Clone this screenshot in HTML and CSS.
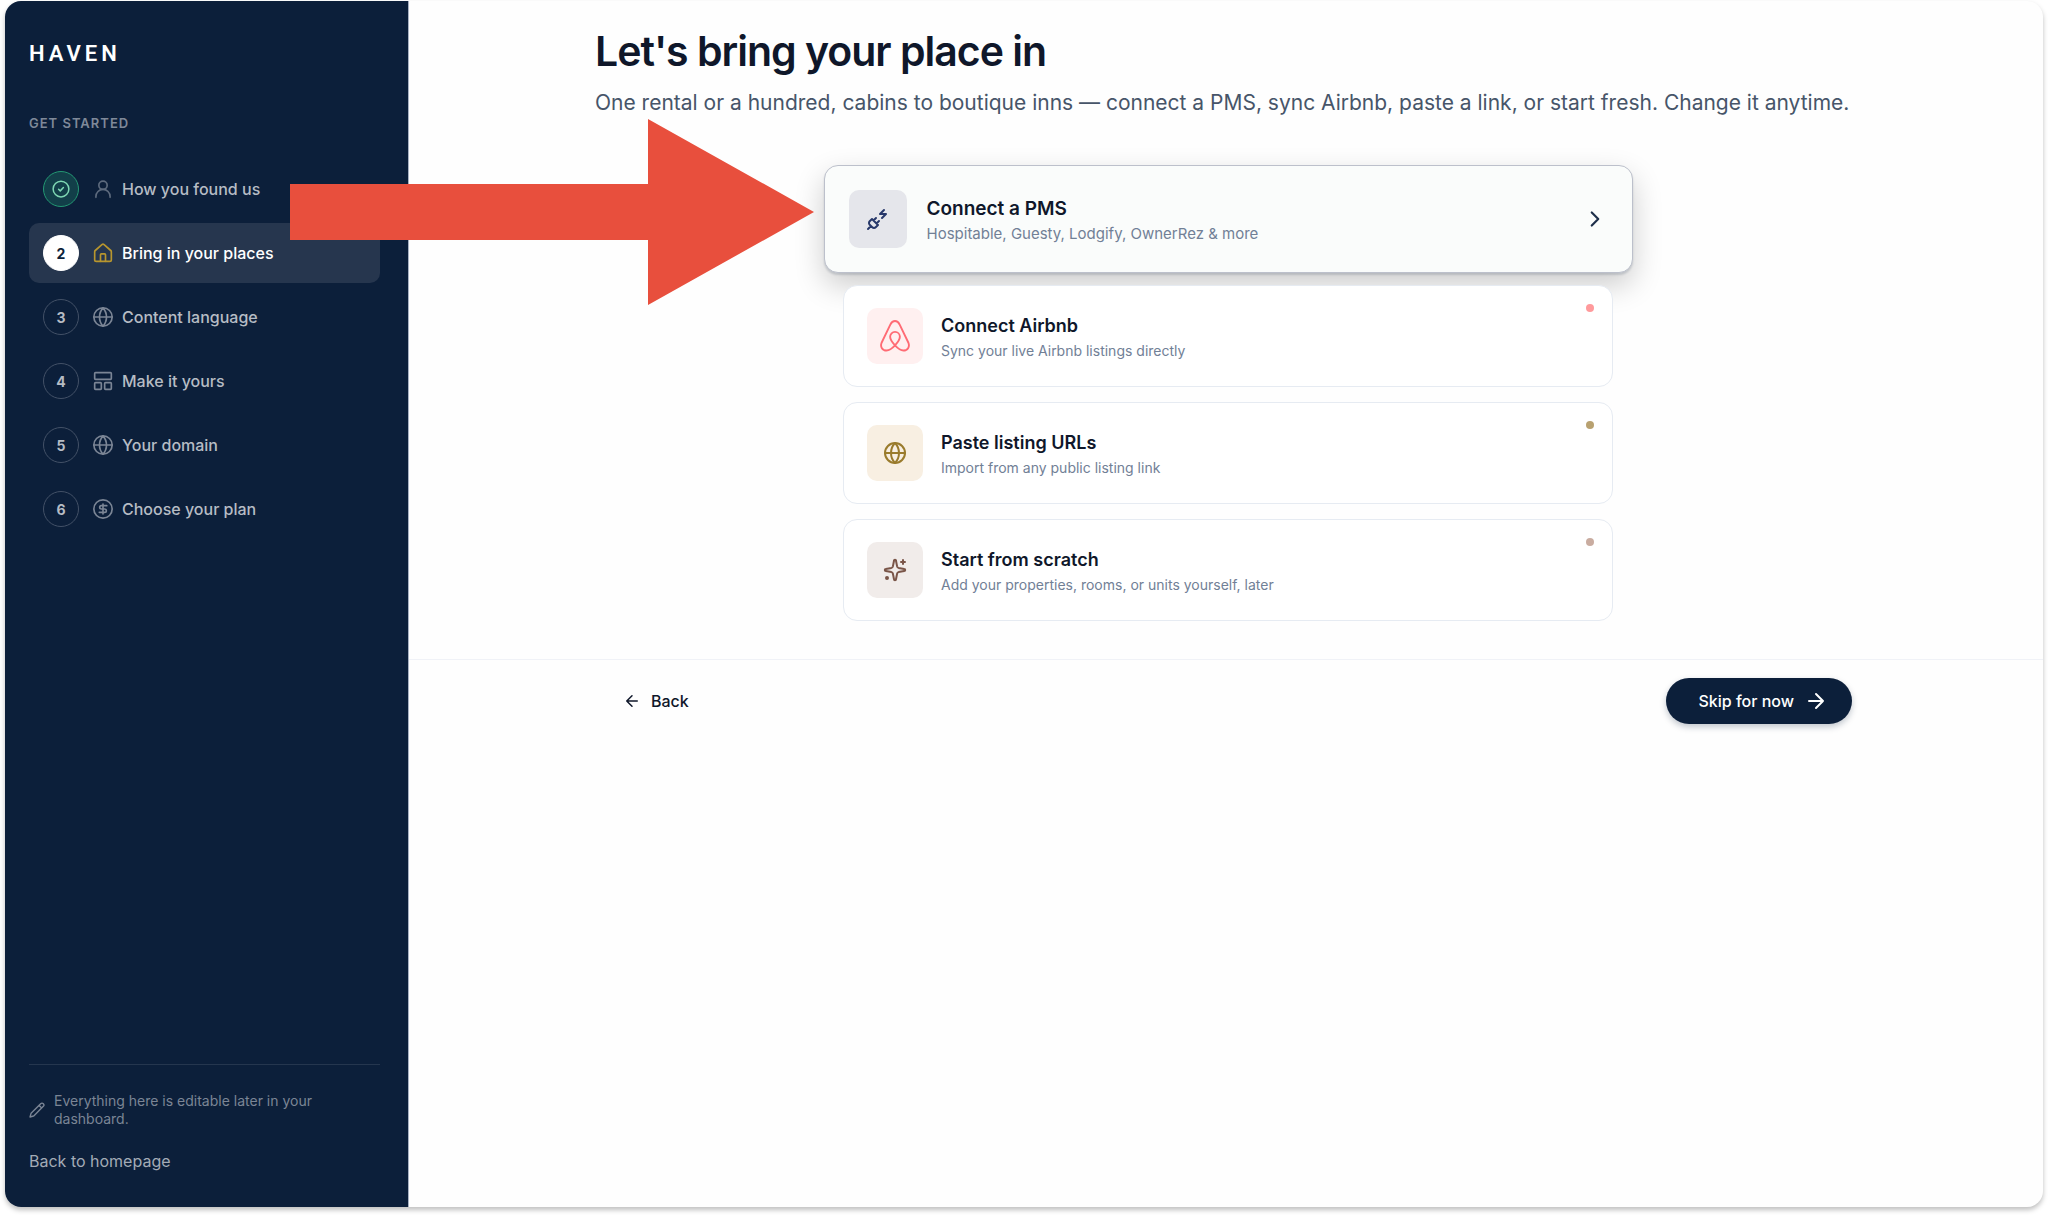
FILE: index.html
```html
<!DOCTYPE html>
<html lang="en">
<head>
  <meta charset="UTF-8" />
  <meta name="viewport" content="width=device-width, initial-scale=1" />
  <title>Haven - Get started</title>
  <link rel="stylesheet" href="styles.css">
</head>
<body>
  <div class="window">
    <aside class="sidebar">
      <div class="logo">HAVEN</div>
      <p class="sidebar-label">Get started</p>

      <nav class="steps">
        <a href="#" class="step done">
          <span class="badge">
            <svg class="icon" viewBox="0 0 24 24"><circle cx="12" cy="12" r="10.5"/><path d="m8.8 12.3 2.2 2.2 4.2-4.4"/></svg>
          </span>
          <svg class="icon step-icon" viewBox="0 0 24 24"><circle cx="12" cy="7.5" r="5"/><path d="M3.5 22v-1a8.5 8.5 0 0 1 17 0v1"/></svg>
          How you found us
        </a>
        <a href="#" class="step active">
          <span class="badge">2</span>
          <svg class="icon step-icon" viewBox="0 0 24 24"><path d="M15 22v-8a1 1 0 0 0-1-1h-4a1 1 0 0 0-1 1v8"/><path d="M2 10.5a2 2 0 0 1 .7-1.5l8-7a2 2 0 0 1 2.6 0l8 7a2 2 0 0 1 .7 1.5V20a2 2 0 0 1-2 2H4a2 2 0 0 1-2-2z"/></svg>
          Bring in your places
        </a>
        <a href="#" class="step">
          <span class="badge">3</span>
          <svg class="icon step-icon" viewBox="0 0 24 24"><circle cx="12" cy="12" r="11"/><path d="M12 1a16.5 16.5 0 0 0 0 22 16.5 16.5 0 0 0 0-22M1 12h22"/></svg>
          Content language
        </a>
        <a href="#" class="step">
          <span class="badge">4</span>
          <svg class="icon step-icon" viewBox="0 0 24 24"><rect x="2" y="2" width="20" height="8" rx="1"/><rect x="2" y="14" width="8" height="8" rx="1"/><rect x="14" y="14" width="8" height="8" rx="1"/></svg>
          Make it yours
        </a>
        <a href="#" class="step">
          <span class="badge">5</span>
          <svg class="icon step-icon" viewBox="0 0 24 24"><circle cx="12" cy="12" r="11"/><path d="M12 1a16.5 16.5 0 0 0 0 22 16.5 16.5 0 0 0 0-22M1 12h22"/></svg>
          Your domain
        </a>
        <a href="#" class="step">
          <span class="badge">6</span>
          <svg class="icon step-icon" viewBox="0 0 24 24"><circle cx="12" cy="12" r="11"/><path d="M16.5 8h-6.5a2 2 0 1 0 0 4h4a2 2 0 1 1 0 4H7.5M12 18V6"/></svg>
          Choose your plan
        </a>
      </nav>

      <div class="sidebar-footer">
        <p class="note">
          <svg class="icon" viewBox="0 0 24 24"><path d="M21.5 6.5a1 1 0 0 0-4-4L3.5 16.5a2 2 0 0 0-.5.8L1.5 22.5l5.2-1.5a2 2 0 0 0 .8-.5zM15 5l4 4"/></svg>
          <span>Everything here is editable later in your dashboard.</span>
        </p>
        <a href="#" class="home-link">Back to homepage</a>
      </div>
    </aside>

    <main class="main">
      <div class="content">
        <h1>Let's bring your place in</h1>
        <p class="lead">One rental or a hundred, cabins to boutique inns — connect a PMS, sync Airbnb, paste a link, or start fresh. Change it anytime.</p>

        <div class="options">
          <button class="option selected">
            <span class="tile navy">
              <svg class="icon" viewBox="0 0 24 24"><path d="M6.3 20.3a2.4 2.4 0 0 0 3.4 0L12 18l-6-6-2.3 2.3a2.4 2.4 0 0 0 0 3.4zM2 22l3-3M7.5 13.5 10 11M10.5 16.5 13 14M18 3l-4 4h6l-4 4"/></svg>
            </span>
            <span class="option-text">
              <span class="option-title">Connect a PMS</span>
              <span class="option-sub">Hospitable, Guesty, Lodgify, OwnerRez &amp; more</span>
            </span>
            <svg class="icon chevron" viewBox="0 0 24 24"><path d="m9 18 6-6-6-6"/></svg>
          </button>
          <button class="option">
            <span class="tile coral">
              <svg class="icon" viewBox="0 0 32 34"><path d="M16 27C12.5 23.2 10.8 20.5 10.8 17.8a5.2 5.2 0 0 1 10.4 0C21.2 20.5 19.5 23.2 16 27c-2.8 3-5.2 5.5-9 5.5-4.5 0-7-4-5.3-8.3L11 4.8C12.2 2.3 13.7 1 16 1s3.8 1.3 5 3.8l9.3 19.4c1.7 4.300-.8 8.300-5.300 8.300-3.800 0-6.200-2.500-9-5.500z"/></svg>
            </span>
            <span class="option-text">
              <span class="option-title">Connect Airbnb</span>
              <span class="option-sub">Sync your live Airbnb listings directly</span>
            </span>
            <span class="dot coral-dot"></span>
          </button>
          <button class="option">
            <span class="tile gold">
              <svg class="icon" viewBox="0 0 24 24"><circle cx="12" cy="12" r="10"/><path d="M12 2a14.5 14.5 0 0 0 0 20 14.5 14.5 0 0 0 0-20M2 12h20"/></svg>
            </span>
            <span class="option-text">
              <span class="option-title">Paste listing URLs</span>
              <span class="option-sub">Import from any public listing link</span>
            </span>
            <span class="dot gold-dot"></span>
          </button>
          <button class="option">
            <span class="tile brown">
              <svg class="icon" viewBox="0 0 24 24"><path d="M11 2.8a1 1 0 0 1 2 0l1.1 5.6a2 2 0 0 0 1.5 1.5l5.6 1.1a1 1 0 0 1 0 2l-5.6 1.1a2 2 0 0 0-1.5 1.5L13 21.2a1 1 0 0 1-2 0l-1.1-5.6a2 2 0 0 0-1.5-1.5L2.8 13a1 1 0 0 1 0-2l5.6-1.1a2 2 0 0 0 1.5-1.5zM20 2v4M22 4h-4"/><circle cx="4" cy="20" r="1"/></svg>
            </span>
            <span class="option-text">
              <span class="option-title">Start from scratch</span>
              <span class="option-sub">Add your properties, rooms, or units yourself, later</span>
            </span>
            <span class="dot brown-dot"></span>
          </button>
        </div>
      </div>

      <footer class="actions">
        <div class="actions-inner">
          <button class="back">
            <svg class="icon" viewBox="0 0 24 24"><path d="m12 19-7-7 7-7M19 12H5"/></svg>
            Back
          </button>
          <button class="skip">
            Skip for now
            <svg class="icon" viewBox="0 0 24 24"><path d="M5 12h14M12 5l7 7-7 7"/></svg>
          </button>
        </div>
      </footer>
    </main>

    <svg class="pointer" viewBox="0 0 524 186"><path d="M0 65h358V0l166 93-166 93v-65H0z"/></svg>
  </div>
</body>
</html>
```

FILE: styles.css
```css
* {
  box-sizing: border-box;
}

body {
  margin: 0;
  padding: 1px 5px 9px;
  min-height: 100vh;
  display: flex;
  background: #fff;
  color: #0f172a;
  font-family: Inter, "Liberation Sans", sans-serif;
}

button {
  font-family: inherit;
  color: inherit;
  cursor: pointer;
}

a {
  color: inherit;
  text-decoration: none;
}

.window {
  position: relative;
  flex: 1;
  display: flex;
  background: #fefefe;
  border-radius: 16px;
  box-shadow: 0 3px 5px rgba(0, 0, 0, 0.25);
}

.icon {
  width: 20px;
  height: 20px;
  flex: none;
  fill: none;
  stroke: currentColor;
  stroke-width: 2;
  stroke-linecap: round;
  stroke-linejoin: round;
}

/* sidebar */
.sidebar {
  width: 404px;
  flex: none;
  display: flex;
  flex-direction: column;
  padding: 40px 28px 34px 24px;
  background: #0c1f3a;
  border-right: 1px solid #a9b2c3;
  border-radius: 16px 0 0 16px;
  color: #fff;
}

.logo {
  font-family: Roboto, sans-serif;
  font-size: 22px;
  line-height: 26px;
  font-weight: 600;
  letter-spacing: 4px;
}

.sidebar-label {
  margin: 46px 0 26px;
  font-size: 13px;
  line-height: 20px;
  font-weight: 600;
  letter-spacing: 1px;
  text-transform: uppercase;
  color: #7f8999;
}

.steps {
  display: flex;
  flex-direction: column;
  gap: 4px;
}

.step {
  display: flex;
  align-items: center;
  height: 60px;
  padding: 0 14px;
  border-radius: 10px;
  font-size: 16px;
  font-weight: 500;
  color: #b6bcc4;
}

.step.active {
  background: #26364e;
  color: #fff;
}

.badge {
  display: flex;
  align-items: center;
  justify-content: center;
  width: 36px;
  height: 36px;
  margin-right: 14px;
  border: 1px solid #435167;
  border-radius: 50%;
  font-size: 14px;
  font-weight: 700;
}

.done .badge {
  background: #123f49;
  border-color: #239873;
  color: #7fd8b4;
}

.active .badge {
  background: #fff;
  border-color: #fff;
  color: #0c1f3a;
}

.badge .icon {
  width: 18px;
  height: 18px;
}

.step-icon {
  margin-right: 9px;
  color: #7b8595;
}

.done .step-icon {
  color: #5d6a7d;
}

.active .step-icon {
  color: #b8962e;
}

.sidebar-footer {
  margin-top: auto;
  padding-top: 27px;
  border-top: 1px solid #25364e;
}

.note {
  display: flex;
  align-items: center;
  gap: 9px;
  margin: 0 0 21px;
  font-size: 14px;
  line-height: 18px;
  color: #7b8595;
}

.note .icon {
  width: 16px;
  height: 16px;
}

.home-link {
  display: block;
  font-size: 16px;
  line-height: 24px;
  color: #a3abb6;
}

/* main column */
.main {
  flex: 1;
  padding-top: 24px;
}

.content {
  max-width: 1270px;
  margin: 0 auto;
  padding-left: 4px;
}

h1 {
  margin: 0;
  font-size: 41px;
  line-height: 52px;
  font-weight: 600;
  letter-spacing: -1px;
}

.lead {
  margin: 10px 0 46px;
  font-size: 21px;
  line-height: 32px;
  color: #475569;
}

.options {
  display: flex;
  flex-direction: column;
  align-items: center;
  gap: 15px;
  margin-bottom: 38px;
}

.option {
  position: relative;
  display: flex;
  align-items: center;
  gap: 18px;
  width: 100%;
  max-width: 770px;
  height: 102px;
  padding: 0 23px;
  background: #fff;
  border: 1px solid #e6ebf2;
  border-radius: 14px;
  text-align: left;
}

.option.selected {
  gap: 20px;
  max-width: 809px;
  height: 108px;
  margin-bottom: -3px;
  padding: 0 24px;
  background: #fafcfb;
  border-color: #bcc0cb;
  box-shadow: 0 2px 2px rgba(12, 31, 58, 0.15), 0 12px 30px rgba(0, 0, 0, 0.2);
}

.tile {
  display: flex;
  align-items: center;
  justify-content: center;
  flex: none;
  width: 56px;
  height: 56px;
  border-radius: 10px;
}

.selected .tile {
  width: 58px;
  height: 58px;
}

.tile .icon {
  width: 24px;
  height: 24px;
}

.navy {
  background: #e5e6eb;
  color: #27386a;
}

.coral {
  background: #fff0f0;
  color: #ff6b74;
}

.coral .icon {
  width: 30px;
  height: 32px;
}

.gold {
  background: #f8efe2;
  color: #9a7b2c;
}

.brown {
  background: #f1ecea;
  color: #7a5548;
}

.option-text {
  display: flex;
  flex-direction: column;
  flex: 1;
  gap: 3px;
  padding-top: 2px;
}

.option-title {
  font-size: 18px;
  line-height: 25px;
  font-weight: 600;
}

.option-sub {
  font-size: 14px;
  line-height: 20px;
  color: #718096;
}

.selected .option-title {
  font-size: 19px;
}

.selected .option-sub {
  font-size: 15px;
}

.chevron {
  width: 26px;
  height: 26px;
  color: #1e2f4a;
}

.dot {
  position: absolute;
  top: 18px;
  right: 18px;
  width: 8px;
  height: 8px;
  border-radius: 50%;
}

.coral-dot {
  background: #ff9a9c;
}

.gold-dot {
  background: #b8a170;
}

.brown-dot {
  background: #c9aca0;
}

.actions {
  border-top: 1px solid #f0f2f7;
}

.actions-inner {
  display: flex;
  align-items: center;
  justify-content: space-between;
  max-width: 1252px;
  margin: 0 auto;
  padding: 18px 0;
}

.back,
.skip {
  display: flex;
  align-items: center;
  height: 46px;
  border: none;
  border-radius: 23px;
  font-size: 16px;
  font-weight: 500;
}

.back {
  gap: 10px;
  padding: 0 23px;
  background: none;
}

.back .icon {
  width: 18px;
  height: 18px;
}

.skip {
  gap: 10px;
  padding: 0 24px 0 32px;
  background: #0c1f3a;
  color: #fff;
  box-shadow: 0 3px 6px rgba(12, 31, 58, 0.25);
}

.skip .icon {
  width: 24px;
  height: 24px;
}

/* callout arrow over the page */
.pointer {
  position: absolute;
  left: 285px;
  top: 118px;
  width: 524px;
  height: 186px;
  fill: #e84f3d;
}
```
